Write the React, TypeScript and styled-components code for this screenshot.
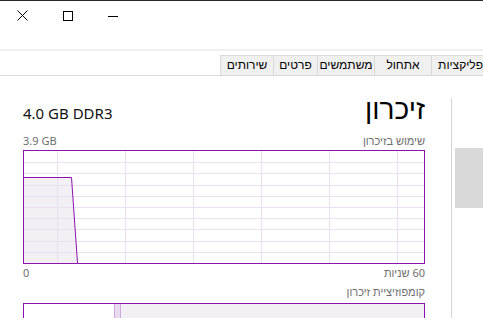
import styled, { createGlobalStyle } from "styled-components";

const GlobalStyle = createGlobalStyle`
  html, body {
    margin: 0;
    padding: 0;
    background: #ffffff;
  }
  body {
    font-family: "Noto Sans", "Liberation Sans", sans-serif;
    color: #000000;
  }
`;

const PURPLE = "#8b12ae";
const GRID = "#ecdff1";
const FILL = "#f2f0f4";

const tabs = [
  { label: "שירותים", width: 54 },
  { label: "פרטים", width: 45 },
  { label: "משתמשים", width: 58 },
  { label: "אתחול", width: 58 },
  { label: "היסטוריית אפליקציות", width: 120 },
  { label: "ביצועים", width: 60 },
  { label: "תהליכים", width: 60 },
];

const Window = styled.div`
  width: 483px;
  height: 318px;
  overflow: hidden;
  box-sizing: border-box;
  border-top: 1px solid #2d2530;
  display: flex;
  flex-direction: column;
`;

const TitleBar = styled.div`
  height: 29px;
  display: flex;
  align-items: center;
  flex-shrink: 0;
`;

const ControlButton = styled.div`
  width: 45px;
  height: 29px;
  display: flex;
  align-items: center;
  justify-content: center;
`;

const MenuBar = styled.div`
  height: 19px;
  flex-shrink: 0;
`;

const Rule = styled.div`
  height: 2px;
  background: #f0f0f0;
  flex-shrink: 0;
`;

const TabBar = styled.div`
  display: flex;
  margin-top: 4px;
  padding-left: 220px;
  height: 20px;
  border-bottom: 1px solid #d9d9d9;
  flex-shrink: 0;
  white-space: nowrap;
`;

const Tab = styled.div<{ $width: number }>`
  flex: 0 0 ${(p) => p.$width}px;
  box-sizing: border-box;
  height: 20px;
  margin-right: -1px;
  border: 1px solid #d9d9d9;
  border-bottom: none;
  background: #f0f0f0;
  font-family: "Liberation Sans", sans-serif;
  font-size: 12px;
  line-height: 19px;
  text-align: center;
  overflow: hidden;
`;

const Body = styled.div`
  flex: 1;
  display: flex;
  min-height: 0;
`;

const Content = styled.div`
  flex: 0 0 451px;
  box-sizing: border-box;
  padding: 0 26px 0 23px;
  display: flex;
  flex-direction: column;
`;

const Sidebar = styled.div`
  flex: 1;
  margin-top: 22px;
  padding: 50px 0 0 3px;
  border-left: 1px solid #d4d4d4;
`;

const SelectedItem = styled.div`
  height: 60px;
  background: #d9d9d9;
`;

const Header = styled.div`
  display: flex;
  justify-content: space-between;
  align-items: baseline;
  margin-top: 14px;
  line-height: 36px;
`;

const Spec = styled.div`
  font-size: 15px;
  color: #111111;
`;

const Title = styled.div`
  font-size: 28px;
  font-weight: 300;
`;

const LabelRow = styled.div<{ $gap: number }>`
  display: flex;
  justify-content: space-between;
  margin-top: ${(p) => p.$gap}px;
  font-size: 11px;
  line-height: 14px;
  color: #6e6e6e;
`;

const Caption = styled.div`
  margin-top: 5px;
  font-size: 11px;
  line-height: 14px;
  color: #6e6e6e;
  text-align: right;
`;

const GraphBox = styled.div`
  margin-top: 2px;
  height: 114px;
  flex-shrink: 0;
  box-sizing: border-box;
  border: 1px solid ${PURPLE};
  display: flex;
`;

const Composition = styled.div`
  margin-top: 4px;
  height: 30px;
  flex-shrink: 0;
  box-sizing: border-box;
  border: 1px solid ${PURPLE};
  display: flex;
`;

const Segment = styled.div<{ $width?: number; $bg: string; $edge?: boolean }>`
  flex: ${(p) => (p.$width ? `0 0 ${p.$width}px` : "1")};
  background: ${(p) => p.$bg};
  box-sizing: border-box;
  ${(p) => (p.$edge ? "border-left: 1px solid #cfa9dc; border-right: 1px solid #cfa9dc;" : "")}
`;

const CloseIcon = () => (
  <svg width="11" height="11" viewBox="0 0 11 11">
    <path d="M0.5 0.5L10.5 10.5M10.5 0.5L0.5 10.5" stroke="#000" strokeWidth="1" />
  </svg>
);

const MaxIcon = () => (
  <svg width="10" height="10" viewBox="0 0 10 10">
    <rect x="0.5" y="0.5" width="9" height="9" fill="none" stroke="#000" strokeWidth="1" />
  </svg>
);

const MinIcon = () => (
  <svg width="10" height="10" viewBox="0 0 10 10">
    <path d="M0 5.5H10" stroke="#000" strokeWidth="1" />
  </svg>
);

const MemoryGraph = () => {
  const cols = [33, 101, 169, 237, 305, 373];
  const rows = [1, 2, 3, 4, 5, 6, 7, 8, 9].map((i) => Math.round(i * 11.2) + 0.5);
  return (
    <svg width="400" height="112" viewBox="0 0 400 112">
      <polygon points="0,26.5 47.5,26.5 53.5,112 0,112" fill={FILL} />
      {cols.map((x) => (
        <line key={x} x1={x + 0.5} y1={0} x2={x + 0.5} y2={112} stroke={GRID} />
      ))}
      {rows.map((y) => (
        <line key={y} x1={0} y1={y} x2={400} y2={y} stroke={GRID} />
      ))}
      <polyline points="0,26.5 47.5,26.5 53.5,112" fill="none" stroke={PURPLE} strokeWidth="1" />
    </svg>
  );
};

export default function App() {
  return (
    <>
      <GlobalStyle />
      <Window>
        <TitleBar>
          <ControlButton>
            <CloseIcon />
          </ControlButton>
          <ControlButton>
            <MaxIcon />
          </ControlButton>
          <ControlButton>
            <MinIcon />
          </ControlButton>
        </TitleBar>
        <MenuBar />
        <Rule />
        <TabBar>
          {tabs.map((t) => (
            <Tab key={t.label} $width={t.width}>
              {t.label}
            </Tab>
          ))}
        </TabBar>
        <Body>
          <Content>
            <Header>
              <Spec>4.0 GB DDR3</Spec>
              <Title>זיכרון</Title>
            </Header>
            <LabelRow $gap={3}>
              <span>3.9 GB</span>
              <span dir="rtl">שימוש בזיכרון</span>
            </LabelRow>
            <GraphBox>
              <MemoryGraph />
            </GraphBox>
            <LabelRow $gap={2}>
              <span>0</span>
              <span dir="rtl">60 שניות</span>
            </LabelRow>
            <Caption dir="rtl">קומפוזיציית זיכרון</Caption>
            <Composition>
              <Segment $width={90} $bg="#ffffff" />
              <Segment $width={7} $bg="#eadcf0" $edge />
              <Segment $bg={FILL} />
            </Composition>
          </Content>
          <Sidebar>
            <SelectedItem />
          </Sidebar>
        </Body>
      </Window>
    </>
  );
}
